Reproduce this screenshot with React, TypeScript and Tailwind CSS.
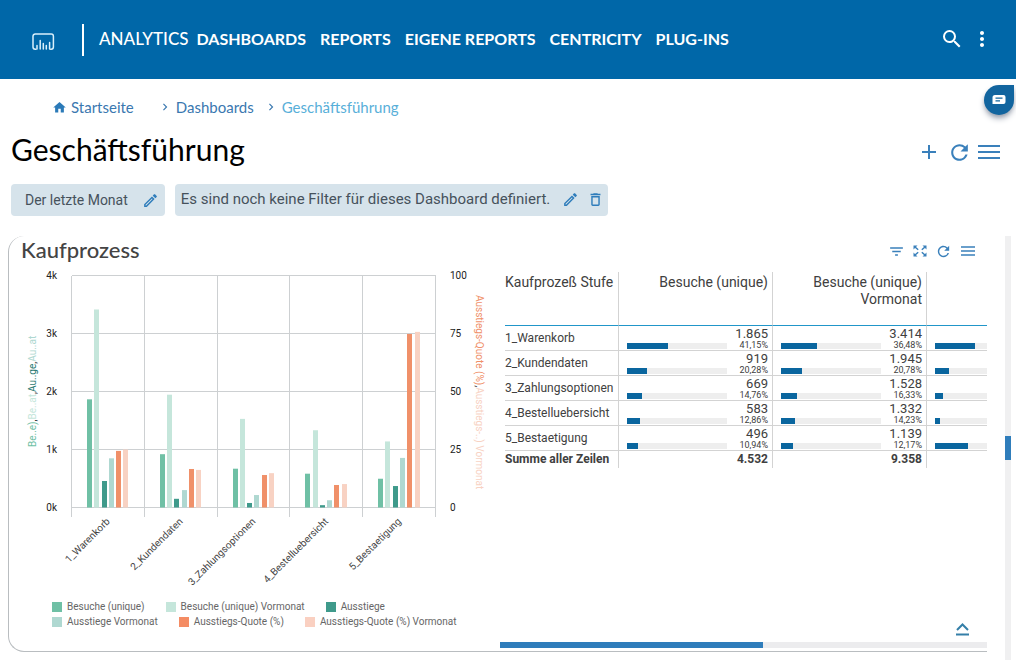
import type { ReactNode } from "react";
import {
  MdAdd,
  MdChevronRight,
  MdDeleteOutline,
  MdFilterList,
  MdHome,
  MdMoreVert,
  MdOutlineEdit,
  MdRefresh,
  MdSearch,
} from "react-icons/md";

const NAV_ITEMS = ["DASHBOARDS", "REPORTS", "EIGENE REPORTS", "CENTRICITY", "PLUG-INS"];

const SERIES = [
  { name: "Besuche (unique)", color: "#6fc0a5", swatch: "bg-[#6fc0a5]", max: 4000 },
  { name: "Besuche (unique) Vormonat", color: "#c5e6db", swatch: "bg-[#c5e6db]", max: 4000 },
  { name: "Ausstiege", color: "#3f9a8b", swatch: "bg-[#3f9a8b]", max: 4000 },
  { name: "Ausstiege Vormonat", color: "#afd8d1", swatch: "bg-[#afd8d1]", max: 4000 },
  { name: "Ausstiegs-Quote (%)", color: "#f09069", swatch: "bg-[#f48c64]", max: 100 },
  { name: "Ausstiegs-Quote (%) Vormonat", color: "#f8d2c3", swatch: "bg-[#fad0c1]", max: 100 },
];

const STEPS = [
  { name: "1_Warenkorb", values: [1865, 3414, 457, 848, 24.4, 25] },
  { name: "2_Kundendaten", values: [919, 1945, 150, 300, 16.6, 16.2] },
  { name: "3_Zahlungsoptionen", values: [669, 1528, 78, 215, 14, 14.8] },
  { name: "4_Bestelluebersicht", values: [583, 1332, 40, 125, 9.7, 10.1] },
  { name: "5_Bestaetigung", values: [496, 1139, 370, 855, 74.8, 75.7] },
];

const ROWS = [
  { name: "1_Warenkorb", visits: "1.865", share: 41.15, prev: "3.414", prevShare: 36.48, exits: 77 },
  { name: "2_Kundendaten", visits: "919", share: 20.28, prev: "1.945", prevShare: 20.78, exits: 27 },
  { name: "3_Zahlungsoptionen", visits: "669", share: 14.76, prev: "1.528", prevShare: 16.33, exits: 15 },
  { name: "4_Bestelluebersicht", visits: "583", share: 12.86, prev: "1.332", prevShare: 14.23, exits: 9 },
  { name: "5_Bestaetigung", visits: "496", share: 10.94, prev: "1.139", prevShare: 12.17, exits: 63 },
];

function formatPercent(value: number): string {
  return `${value.toFixed(2).replace(".", ",")}%`;
}

function IconButton({ label, children }: { label: string; children: ReactNode }) {
  return (
    <button type="button" aria-label={label} className="flex items-center justify-center">
      {children}
    </button>
  );
}

function Logo() {
  return (
    <svg width="23" height="18" viewBox="0 0 23 18" fill="none" stroke="#d9f0fb" strokeLinecap="round">
      <path d="M4 16.2H3.2A2.2 2.2 0 0 1 1 14V3.2A2.2 2.2 0 0 1 3.2 1H19.2A2.2 2.2 0 0 1 21.4 3.2V14A2.2 2.2 0 0 1 19.2 16.2H18.6" strokeWidth="1.5" />
      <path d="M5 12.500V16M8.200 7.500V16M11.300 10.500V16M14.300 12.500V16M17.600 9.500V16" strokeWidth="1.5" />
    </svg>
  );
}

function ExpandIcon() {
  return (
    <svg width="14" height="12" viewBox="0 0 14 12" fill="currentColor" stroke="currentColor">
      <path d="M0.500 0.500H4.500L0.500 4.500ZM13.500 0.500H9.500L13.500 4.500ZM0.500 11.500H4.500L0.500 7.500ZM13.500 11.500H9.500L13.500 7.500Z" stroke="none" />
      <path d="M2 2L5.200 4.800M12 2L8.800 4.800M2 10L5.200 7.200M12 10L8.800 7.200" strokeWidth="1.500" />
    </svg>
  );
}

function Header() {
  return (
    <header className="flex h-[79px] items-center bg-[#0067a8] pl-8 pr-[22px] font-['Lato',sans-serif] text-white">
      <a href="#start" aria-label="Start" className="pt-1">
        <Logo />
      </a>
      <div className="ml-[27px] h-8 w-0.5 bg-white" />
      <a href="#analytics" className="ml-[15px] pb-0.5 text-[17px] font-medium">
        ANALYTICS
      </a>
      <nav className="ml-2 flex gap-3.5 pb-0.5 text-base font-bold">
        {NAV_ITEMS.map((item) => (
          <a key={item} href="#nav" className="whitespace-nowrap">
            {item}
          </a>
        ))}
      </nav>
      <div className="ml-auto flex items-center gap-1.5 pb-0.5">
        <IconButton label="Suche">
          <MdSearch size={24} />
        </IconButton>
        <IconButton label="Mehr">
          <MdMoreVert size={24} />
        </IconButton>
      </div>
    </header>
  );
}

function Breadcrumb() {
  return (
    <nav aria-label="Brotkrumen" className="flex h-5 items-center font-['Lato',sans-serif] text-[15px] text-[#3a78b0]">
      <a href="#start" className="flex items-center gap-1">
        <MdHome size={15} className="text-[#2b7ab8]" />
        Startseite
      </a>
      <MdChevronRight size={14} className="ml-6 mr-1" />
      <a href="#dashboards">Dashboards</a>
      <MdChevronRight size={14} className="ml-2.5 mr-1" />
      <span className="text-[#58afd9]">Geschäftsführung</span>
    </nav>
  );
}

function PageHead() {
  return (
    <section className="pl-[11px] pr-4 pt-[18px]">
      <div className="pl-[41px]">
        <Breadcrumb />
      </div>
      <div className="mt-3 flex h-10 items-center justify-between">
        <h1 className="font-['Lato',sans-serif] text-[30px] leading-10 text-black">Geschäftsführung</h1>
        <div className="flex items-center gap-1.5 pt-1.5 text-[#3a80bb]">
          <IconButton label="Hinzufügen">
            <MdAdd size={24} />
          </IconButton>
          <IconButton label="Aktualisieren">
            <MdRefresh size={25} />
          </IconButton>
          <IconButton label="Menü">
            <svg width="22" height="14" viewBox="0 0 22 14" stroke="currentColor" strokeWidth="2">
              <path d="M0 1H22M0 7H22M0 13H22" />
            </svg>
          </IconButton>
        </div>
      </div>
      <div className="mt-[15px] flex gap-2.5 text-[#46525c]">
        <div className="flex h-8 items-center gap-3.5 rounded bg-[#d6e3eb] pl-3.5 pr-1.5 text-sm">
          <span>Der letzte Monat</span>
          <button type="button" aria-label="Zeitraum bearbeiten" className="text-[#2f7dbb]">
            <MdOutlineEdit size={17} />
          </button>
        </div>
        <div className="flex h-8 items-center rounded bg-[#d6e3eb] pb-0.5 pl-1.5 pr-1 text-[15px]">
          <span>Es sind noch keine Filter für dieses Dashboard definiert.</span>
          <button type="button" aria-label="Filter bearbeiten" className="ml-3 text-[#2f7dbb]">
            <MdOutlineEdit size={17} />
          </button>
          <button type="button" aria-label="Filter löschen" className="ml-2 text-[#2f7dbb]">
            <MdDeleteOutline size={17} />
          </button>
        </div>
      </div>
    </section>
  );
}

const PLOT = { left: 62.5, right: 426.5, top: 7.5, bottom: 239.5 };
const PLOT_HEIGHT = PLOT.bottom - PLOT.top;
const STEP_WIDTH = (PLOT.right - PLOT.left) / STEPS.length;

function FunnelChart() {
  return (
    <svg viewBox="0 0 489 326" className="block w-full" fontFamily="Roboto, sans-serif" fontSize="10">
      <g stroke="#cdd0d2" strokeWidth="1" shapeRendering="crispEdges">
        {[0, 1, 2, 3, 4].map((i) => {
          const y = PLOT.top + (PLOT_HEIGHT / 4) * i;
          return <line key={i} x1={PLOT.left} x2={PLOT.right} y1={y} y2={y} />;
        })}
        {[0, 1, 2, 3, 4, 5].map((i) => {
          const x = PLOT.left + STEP_WIDTH * i;
          return <line key={i} x1={x} x2={x} y1={PLOT.top} y2={PLOT.bottom + 9} />;
        })}
      </g>

      {[0, 1, 2, 3, 4].map((i) => {
        const y = PLOT.bottom - (PLOT_HEIGHT / 4) * i + 3.5;
        return (
          <g key={i} fill="#222">
            <text x="48" y={y} textAnchor="end">{`${i}k`}</text>
            <text x="441" y={y}>{i * 25}</text>
          </g>
        );
      })}

      {STEPS.map((step, i) => {
        const start = PLOT.left + STEP_WIDTH * i;
        return (
          <g key={step.name}>
            {step.values.map((value, j) => {
              const height = (value / SERIES[j].max) * PLOT_HEIGHT;
              return (
                <rect
                  key={j}
                  x={Math.round(start + 15.4 + j * 7.3)}
                  y={PLOT.bottom - height}
                  width="5"
                  height={height}
                  fill={SERIES[j].color}
                />
              );
            })}
            <text textAnchor="end" fill="#444" transform={`translate(${start + 39} 254) rotate(-45)`}>
              {step.name}
            </text>
          </g>
        );
      })}

      <text transform="translate(27 179) rotate(-90)">
        <tspan fill="#6fc0a5">Be..e)</tspan>
        <tspan fill="#333">,</tspan>
        <tspan fill="#c5e6db">Be..at</tspan>
        <tspan fill="#333">,</tspan>
        <tspan fill="#2b7a72">Au..ge</tspan>
        <tspan fill="#333">,</tspan>
        <tspan fill="#afd8d1">Au..at</tspan>
      </text>
      <text transform="translate(467 27) rotate(90)">
        <tspan fill="#f09069">Ausstiegs-Quote (%)</tspan>
        <tspan fill="#333">,</tspan>
        <tspan fill="#f8d2c3">Ausstiegs-..) Vormonat</tspan>
      </text>
    </svg>
  );
}

function Legend() {
  return (
    <ul className="flex flex-wrap gap-x-[21px] pl-[43px] pr-3 text-[10px] leading-[15px] text-[#666]">
      {SERIES.map((series) => (
        <li key={series.name} className="flex items-center gap-[5px] whitespace-nowrap">
          <span className={`size-2.5 ${series.swatch}`} />
          {series.name}
        </li>
      ))}
    </ul>
  );
}

function ShareBar({ percent }: { percent: number }) {
  return (
    <div className="h-1.5 flex-1 bg-[#eeeeee]">
      <div className="h-full bg-[#0a669f]" style={{ width: `${percent}%` }} />
    </div>
  );
}

function ValueCell({ value, share }: { value: string; share: number }) {
  return (
    <td className="border-b border-r border-[#d3d3d3] p-0 pl-2 pr-1 align-top">
      <div className="pb-px pt-px text-right text-[13px] leading-[13px]">{value}</div>
      <div className="flex h-[9px] items-center text-[9px] leading-[9px]">
        <ShareBar percent={share} />
        <span className="w-[41px] text-right">{formatPercent(share)}</span>
      </div>
    </td>
  );
}

function FunnelTable() {
  return (
    <table className="ml-[5px] w-[calc(100%-5px)] table-fixed border-separate border-spacing-0 text-[#404040]">
      <colgroup>
        <col className="w-[114px]" />
        <col className="w-[154px]" />
        <col className="w-[154px]" />
        <col />
      </colgroup>
      <thead>
        <tr className="h-[54px] align-top text-sm leading-[17px]">
          <th className="whitespace-nowrap border-b border-r border-[#2196c9] border-r-[#d3d3d3] p-0 pt-0.5 text-left font-normal">
            Kaufprozeß Stufe
          </th>
          <th className="border-b border-r border-[#2196c9] border-r-[#d3d3d3] p-0 pr-1 pt-0.5 text-right font-normal">
            Besuche (unique)
          </th>
          <th className="border-b border-r border-[#2196c9] border-r-[#d3d3d3] p-0 pr-1 pt-0.5 text-right font-normal">
            Besuche (unique)
            <br />
            Vormonat
          </th>
          <th aria-label="Ausstiege" className="border-b border-[#2196c9]" />
        </tr>
      </thead>
      <tbody>
        {ROWS.map((row) => (
          <tr key={row.name} className="h-[25px]">
            <td className="whitespace-nowrap border-b border-r border-[#d3d3d3] p-0 text-xs">{row.name}</td>
            <ValueCell value={row.visits} share={row.share} />
            <ValueCell value={row.prev} share={row.prevShare} />
            <td className="border-b border-[#d3d3d3] p-0 pl-2 align-top">
              <div className="mt-[15px] flex h-[9px] items-center">
                <ShareBar percent={row.exits} />
              </div>
            </td>
          </tr>
        ))}
      </tbody>
      <tfoot>
        <tr className="text-xs font-bold leading-[17px]">
          <td className="whitespace-nowrap border-r border-[#d3d3d3] p-0">Summe aller Zeilen</td>
          <td className="border-r border-[#d3d3d3] p-0 pr-1 text-right">4.532</td>
          <td className="border-r border-[#d3d3d3] p-0 pr-1 text-right">9.358</td>
          <td className="p-0" />
        </tr>
      </tfoot>
    </table>
  );
}

function FunnelPanel() {
  return (
    <article className="flex min-w-0 flex-1 flex-col rounded-l-2xl border-b border-l border-[#b9bdc0]">
      <div className="flex h-8 items-center justify-between pl-3 pr-[11px]">
        <h2 className="pb-1 font-['Lato',sans-serif] text-[22px] font-medium leading-7 text-[#444]">Kaufprozess</h2>
        <div className="flex items-center gap-2 pb-0.5 text-[#3a80bb]">
          <IconButton label="Filter">
            <MdFilterList size={17} />
          </IconButton>
          <IconButton label="Vergrößern">
            <ExpandIcon />
          </IconButton>
          <IconButton label="Neu laden">
            <MdRefresh size={17} />
          </IconButton>
          <IconButton label="Optionen">
            <svg width="16" height="10" viewBox="0 0 16 10" stroke="currentColor" strokeWidth="1.6">
              <path d="M1 1H15M1 5H15M1 9H15" />
            </svg>
          </IconButton>
        </div>
      </div>
      <div className="grid flex-1 grid-cols-2">
        <div className="pb-[22px]">
          <FunnelChart />
          <div className="mt-[5px]">
            <Legend />
          </div>
        </div>
        <div className="flex flex-col pl-0.5 pt-1">
          <FunnelTable />
          <div className="mt-auto flex justify-end pb-1.5 pr-4">
            <IconButton label="Nach oben">
              <svg width="18" height="14" viewBox="0 0 18 14" fill="none" stroke="#347fa8" strokeWidth="2">
                <path d="M4 8L9.500 2.500L15 8M3 12.500H16" />
              </svg>
            </IconButton>
          </div>
          <div className="mb-[3px] h-1.5 bg-[#ececee]">
            <div className="h-full w-[54%] bg-[#2f7dbb]" />
          </div>
        </div>
      </div>
    </article>
  );
}

function ChatButton() {
  return (
    <button
      type="button"
      aria-label="Chat"
      className="absolute right-0.5 top-[85px] flex size-[30px] items-center justify-center rounded-full rounded-tr-sm bg-[#12659f] shadow-md shadow-gray-400"
    >
      <svg width="14" height="12" viewBox="0 0 14 12">
        <path d="M3 1H11.500A2 2 0 0 1 13.500 3V8A2 2 0 0 1 11.500 10H0.500V3.500A2.500 2.500 0 0 1 3 1Z" fill="#fff" />
        <path d="M3.500 4.200H10.500M3.500 6.800H8" stroke="#12659f" strokeWidth="1.300" />
      </svg>
    </button>
  );
}

export default function App() {
  return (
    <div className="relative flex min-h-screen flex-col bg-white font-['Roboto',sans-serif]">
      <Header />
      <ChatButton />
      <PageHead />
      <main className="mt-5 flex flex-1 pl-2 pr-[5px]">
        <div className="flex min-w-0 flex-1 flex-col pb-2">
          <FunnelPanel />
        </div>
        <div className="ml-[18px] w-1.5 bg-[#f0f0f1] pt-[200px]">
          <div className="h-6 bg-[#2f7dbb]" />
        </div>
      </main>
    </div>
  );
}
